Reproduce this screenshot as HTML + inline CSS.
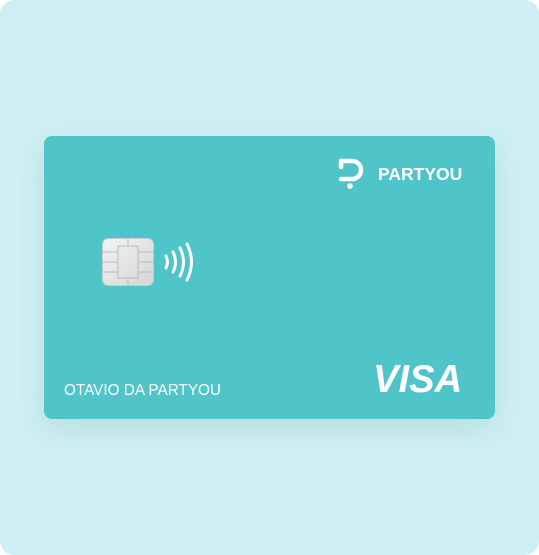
<!DOCTYPE html>
<html><head><style>
html,body{margin:0;padding:0;background:#fff;width:539px;height:555px;overflow:hidden}
.bg{position:absolute;left:0;top:0;width:539px;height:555px;background:#cff0f2;border-radius:14px}
.card{position:absolute;left:44px;top:136px;width:451px;height:283px;background:#4fc4c9;border-radius:8px;box-shadow:0 10px 30px rgba(0,90,100,0.12)}
.t{position:absolute;color:#fff;font-family:"Liberation Sans",sans-serif}
</style></head><body>
<div class="bg"></div>
<div class="card">
<svg style="position:absolute;left:294px;top:21px" width="32" height="34" viewBox="0 0 32 34">
<path d="M3 4 V10 M3 4 H14 A9 9 0 0 1 14 22 H3" fill="none" stroke="#fff" stroke-width="4.5" stroke-linecap="round" stroke-linejoin="round"/>
<circle cx="12" cy="29" r="2.8" fill="#fff"/>
</svg>
<div class="t" style="left:334px;top:28px;font-size:17.5px;font-weight:bold;letter-spacing:0px">PARTYOU</div>
<svg style="position:absolute;left:58px;top:102px" width="52" height="48" viewBox="0 0 52 48">
<defs><linearGradient id="g" x1="0" y1="0" x2="1" y2="1"><stop offset="0" stop-color="#f2f2f2"/><stop offset="1" stop-color="#d6d6d6"/></linearGradient></defs>
<rect x="0.5" y="0.5" width="51" height="47" rx="6" fill="url(#g)" stroke="#ccc"/>
<g stroke="#bbb" stroke-width="1" fill="none">
<path d="M0 14 H16 M0 24 H16 M0 34 H16 M36 14 H52 M36 24 H52 M36 34 H52"/>
<path d="M16 8 H36 V40 H16 Z M26 0 V8 M26 40 V48"/>
</g>
</svg>
<svg style="position:absolute;left:118px;top:106px" width="32" height="40" viewBox="0 0 32 40" fill="none" stroke="#fff" stroke-width="3" stroke-linecap="round">
<path d="M4 14 Q7 20 4 26"/><path d="M11 10 Q16 20 11 30"/><path d="M18 6 Q25 20 18 34"/><path d="M25 2 Q34 20 25 38"/>
</svg>
<div class="t" style="left:20px;top:246px;font-size:15.3px;letter-spacing:0px">OTAVIO DA PARTYOU</div>
<div class="t" style="left:329px;top:222px;font-size:39px;font-weight:bold;font-style:italic;letter-spacing:0px;transform:scaleX(0.98);transform-origin:left">VISA</div>
</div>
</body></html>
